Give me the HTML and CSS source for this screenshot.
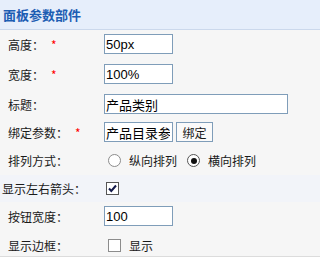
FILE: index.html
```html
<!DOCTYPE html>
<html lang="zh">
<head>
<meta charset="utf-8">
<title>面板参数部件</title>
<link rel="stylesheet" href="styles.css">
</head>
<body>
<div class="panel">
  <div class="panel-head">面板参数部件</div>
  <div class="form">
    <div class="row r1">
      <div class="label">高度：<span class="req">*</span></div>
      <div class="value"><input class="txt short" type="text" value="50px"></div>
    </div>
    <div class="row r2">
      <div class="label">宽度：<span class="req">*</span></div>
      <div class="value"><input class="txt short" type="text" value="100%"></div>
    </div>
    <div class="row r3">
      <div class="label">标题：</div>
      <div class="value"><input class="txt long" type="text" value="产品类别"></div>
    </div>
    <div class="row r4">
      <div class="label">绑定参数：<span class="req">*</span></div>
      <div class="value"><input class="txt short" type="text" value="产品目录参数"><button class="btn" type="button">绑定</button></div>
    </div>
    <div class="row r5">
      <div class="label">排列方式：</div>
      <div class="value">
        <span class="radio"></span><span class="opt">纵向排列</span>
        <span class="radio checked"></span><span class="opt">横向排列</span>
      </div>
    </div>
    <div class="row r6 hl">
      <div class="label wide">显示左右箭头：</div>
      <div class="value">
        <span class="check checked"><svg width="11" height="11" viewBox="0 0 11 11"><path d="M2 5.5 L4.3 8 L9 2.5" fill="none" stroke="#141a4a" stroke-width="2"/></svg></span>
      </div>
    </div>
    <div class="row r7">
      <div class="label">按钮宽度：</div>
      <div class="value"><input class="txt short" type="text" value="100"></div>
    </div>
    <div class="row r8">
      <div class="label">显示边框：</div>
      <div class="value"><span class="check plain"></span><span class="opt">显示</span></div>
    </div>
  </div>
</div>
</body>
</html>
```
FILE: styles.css
```css
html, body {
  margin: 0;
  padding: 0;
  background: #f6f6f6;
}
body {
  font-family: "Noto Sans CJK SC", "Liberation Sans", sans-serif;
  font-size: 12px;
  color: #1a1a1a;
}
.panel-head {
  height: 29px;
  line-height: 29px;
  padding-left: 3px;
  background: #e6eefb;
  border-bottom: 1px solid #cbd8ec;
  color: #1d5db3;
  font-weight: bold;
  font-size: 13px;
}
.form {
  border-bottom: 1px solid #dcdcdc;
}
.row {
  display: grid;
  grid-template-columns: 104px 1fr;
  align-items: center;
  box-sizing: border-box;
}
.r1 { height: 28px; }
.r2 { height: 32px; }
.r3 { height: 28px; }
.r4 { height: 28px; }
.r5 { height: 29px; }
.r6 { height: 27px; }
.r7 { height: 28px; }
.r8 { height: 26px; padding-top: 4px; }
.hl { background: #f2f4f9; }
.label {
  padding-left: 8px;
  white-space: nowrap;
}
.label.wide { padding-left: 2px; }
.req {
  color: #ff0000;
  margin-left: 7px;
}
.value {
  display: flex;
  align-items: center;
}
.txt {
  box-sizing: border-box;
  height: 20px;
  margin: 0;
  padding: 0 2px 0 1px;
  border: 1px solid #7f9db9;
  background: #fff;
  font-family: "Liberation Sans", "Noto Sans CJK SC", sans-serif;
  font-size: 13px;
  color: #000;
  outline: none;
}
.txt.short { width: 69px; }
.txt.long { width: 184px; }
.btn {
  box-sizing: border-box;
  width: 37px;
  height: 20px;
  margin: 0 0 0 3px;
  padding: 0;
  border: 1px solid #7f9db9;
  background: #fafafa;
  font-family: "Noto Sans CJK SC", sans-serif;
  font-size: 12px;
  color: #1a1a1a;
}
.radio {
  box-sizing: border-box;
  width: 13px;
  height: 13px;
  border: 1px solid #8c8c8c;
  border-radius: 50%;
  background: #fff;
  margin-left: 4px;
  display: flex;
  align-items: center;
  justify-content: center;
}
.radio.checked { margin-left: 10px; border-color: #555; }
.radio.checked::after {
  content: "";
  width: 6px;
  height: 6px;
  border-radius: 50%;
  background: #111;
}
.opt { margin-left: 8px; }
.check {
  box-sizing: border-box;
  width: 13px;
  height: 13px;
  background: #fff;
  display: flex;
  align-items: center;
  justify-content: center;
}
.check.checked {
  border: 1px solid #555;
  margin-left: 2px;
}
.check.plain {
  border: 1px solid #8c8c8c;
  margin-left: 4px;
}
```
